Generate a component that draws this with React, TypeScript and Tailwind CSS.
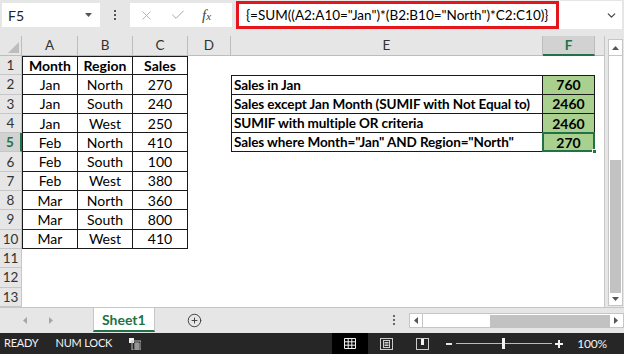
import React from 'react';
import { X, Check, ChevronDown, CirclePlus } from 'lucide-react';

// sheet data for A1:C10
const rows = [
  ['Jan', 'North', '270'],
  ['Jan', 'South', '240'],
  ['Jan', 'West', '250'],
  ['Feb', 'North', '410'],
  ['Feb', 'South', '100'],
  ['Feb', 'West', '380'],
  ['Mar', 'North', '360'],
  ['Mar', 'South', '800'],
  ['Mar', 'West', '410'],
];

// summary block E2:F5
const summary = [
  ['Sales in Jan', '760'],
  ['Sales except Jan Month (SUMIF with Not Equal to)', '2460'],
  ['SUMIF with multiple OR criteria', '2460'],
  ['Sales where Month="Jan" AND Region="North"', '270'],
];

const colHeads = [
  { name: 'A', w: 'w-[56px]' },
  { name: 'B', w: 'w-[55px]' },
  { name: 'C', w: 'w-[55px]' },
  { name: 'D', w: 'w-[43px]' },
  { name: 'E', w: 'w-[312px]' },
  { name: 'F', w: 'w-[52px]' },
];

const FormulaBar = () => (
  <div className="h-[36px] flex items-start pt-[3px] pl-[2px] pr-[2px]">
    <div className="w-[98px] h-[24px] bg-white flex items-center justify-between pl-[6px] pr-[8px] text-[14px] text-[#222]">
      <span>F5</span>
      <svg width="7" height="4" viewBox="0 0 7 4"><path d="M0 0h7L3.5 4z" fill="#555" /></svg>
    </div>
    <div className="w-[30px] h-[24px] flex flex-col items-center justify-center gap-[2px]">
      <span className="w-[2px] h-[2px] bg-[#555]" />
      <span className="w-[2px] h-[2px] bg-[#555]" />
      <span className="w-[2px] h-[2px] bg-[#555]" />
    </div>
    <div className="w-[102px] h-[24px] bg-white flex items-center pl-[9px] gap-[16px]">
      <X size={15} strokeWidth={1.3} color="#a6a6a6" />
      <Check size={16} strokeWidth={1.5} color="#a6a6a6" />
      <span className="font-['Liberation_Serif',serif] italic text-[15px] text-[#444] leading-none">
        f<span className="text-[11px]">x</span>
      </span>
    </div>
    <div className="ml-[4px] mt-[-2px] h-[28px] flex-1 bg-white flex items-center">
      <div className="w-[323px] h-full border-[3px] border-[#e4161c] flex items-center pl-[7px] text-[13.5px] text-black whitespace-nowrap">
        {'{=SUM((A2:A10="Jan")*(B2:B10="North")*C2:C10)}'}
      </div>
      <div className="flex-1" />
      <ChevronDown size={13} strokeWidth={2.2} color="#444" className="mr-[4px]" />
    </div>
  </div>
);

const Grid = () => (
  <div className="w-[605px] h-[271px] flex flex-col bg-white border-r border-[#c6c6c6]">
    {/* column headers */}
    <div className="h-[20px] flex bg-[#e6e6e6] text-[13.5px] text-[#333]">
      <div className="w-[22px] h-full border-r border-b border-[#bdbdbd] flex items-end justify-end p-[2px]">
        <svg width="11" height="11" viewBox="0 0 11 11"><path d="M11 0v11H0z" fill="#bdbdbd" /></svg>
      </div>
      {colHeads.map((c) =>
        c.name === 'F' ? (
          <div key={c.name} className={`${c.w} h-full bg-[#d2d2d2] border-r border-[#bdbdbd] border-b-2 border-b-[#217346] flex items-center justify-center text-[#217346] font-bold`}>
            {c.name}
          </div>
        ) : (
          <div key={c.name} className={`${c.w} h-full border-r border-b border-[#bdbdbd] flex items-center justify-center`}>
            {c.name}
          </div>
        )
      )}
      <div className="flex-1 h-full border-b border-[#bdbdbd]" />
    </div>
    {/* rows */}
    {Array.from({ length: 13 }).map((_, i) => {
      const r = i + 1;
      const data = r >= 2 && r <= 10 ? rows[r - 2] : null;
      const sum = r >= 2 && r <= 5 ? summary[r - 2] : null;
      const head = r === 1;
      const abc = head ? ['Month', 'Region', 'Sales'] : data;
      return (
        <div key={r} className="h-[19.3px] flex text-[14px] text-black">
          {r === 5 ? (
            <div className="w-[22px] h-full bg-[#d2d2d2] border-b border-[#c6c6c6] border-r-2 border-r-[#217346] flex items-center justify-center text-[13.5px] text-[#217346] font-bold">
              {r}
            </div>
          ) : (
            <div className="w-[22px] h-full bg-[#e6e6e6] border-b border-r border-[#c6c6c6] flex items-center justify-center text-[13.5px] text-[#333]">
              {r}
            </div>
          )}
          {abc ? (
            <>
              <div className={`w-[56px] h-full border-l border-r border-b border-[#1a1a1a] ${head ? 'border-t font-bold' : ''} flex items-center justify-center`}>
                {abc[0]}
              </div>
              <div className={`w-[55px] h-full border-r border-b border-[#1a1a1a] ${head ? 'border-t font-bold' : ''} flex items-center justify-center`}>
                {abc[1]}
              </div>
              <div className={`w-[55px] h-full border-r border-b border-[#1a1a1a] ${head ? 'border-t font-bold' : ''} flex items-center justify-center`}>
                {abc[2]}
              </div>
            </>
          ) : (
            <div className="w-[166px] h-full" />
          )}
          <div className="w-[43px] h-full" />
          {sum ? (
            <>
              <div className={`w-[312px] h-full border-l border-r border-b border-[#1a1a1a] ${r === 2 ? 'border-t' : ''} flex items-center pl-[2px] text-[13.5px] tracking-[-0.1px] font-bold whitespace-nowrap`}>
                {sum[0]}
              </div>
              <div className={`relative w-[52px] h-full bg-[#a9d08e] border-r border-b border-[#1a1a1a] ${r === 2 ? 'border-t' : ''} flex items-center justify-center font-bold`}>
                {sum[1]}
                {r === 5 && (
                  <div className="absolute left-[-1px] top-[-1px] right-[-1px] bottom-[-1px] border-2 border-[#217346]">
                    <div className="absolute right-[-4px] bottom-[-4px] w-[5px] h-[5px] bg-[#217346] border border-white" />
                  </div>
                )}
              </div>
            </>
          ) : (
            <div className="w-[364px] h-full" />
          )}
          <div className="flex-1" />
        </div>
      );
    })}
  </div>
);

const VScroll = () => (
  <div className="flex-1 pt-[3px] pl-[3px] pr-[1px]">
    <div className="w-[15px] flex flex-col border border-[#c6c6c6] bg-white">
      <div className="h-[16px] flex items-center justify-center border-b border-[#c6c6c6]">
        <svg width="7" height="4" viewBox="0 0 7 4"><path d="M0 4h7L3.5 0z" fill="#555" /></svg>
      </div>
      <div className="h-[104px] bg-white" />
      <div className="h-[133px] bg-[#c2c2c2] mx-[1px]" />
      <div className="h-[12px] flex items-center justify-center">
        <svg width="7" height="4" viewBox="0 0 7 4"><path d="M0 0h7L3.5 4z" fill="#555" /></svg>
      </div>
    </div>
  </div>
);

const TabBar = () => (
  <div className="h-[26px] flex items-start border-t border-[#c6c6c6] bg-[#e6e6e6]">
    <div className="w-[93px] h-[24px] flex items-center pl-[23px] gap-[22px]">
      <svg width="4" height="7" viewBox="0 0 4 7"><path d="M4 0v7L0 3.5z" fill="#a6a6a6" /></svg>
      <svg width="4" height="7" viewBox="0 0 4 7"><path d="M0 0v7l4-3.5z" fill="#a6a6a6" /></svg>
    </div>
    <div className="w-[62px] h-[24px] bg-white border-l border-r border-[#c6c6c6] border-b-2 border-b-[#217346] flex items-center justify-center text-[14px] font-bold text-[#217346]">
      Sheet1
    </div>
    <div className="w-[80px] h-[24px] flex items-center justify-center">
      <CirclePlus size={15} strokeWidth={1.6} color="#444" />
    </div>
    <div className="w-[155px]" />
    <div className="w-[10px] h-[24px] flex flex-col items-center justify-center gap-[2px]">
      <span className="w-[2px] h-[2px] bg-[#666]" />
      <span className="w-[2px] h-[2px] bg-[#666]" />
      <span className="w-[2px] h-[2px] bg-[#666]" />
    </div>
    <div className="ml-[10px] mt-[5px] w-[215px] h-[15px] flex border border-[#c6c6c6] bg-white">
      <div className="w-[13px] h-full flex items-center justify-center border-r border-[#c6c6c6]">
        <svg width="4" height="7" viewBox="0 0 4 7"><path d="M4 0v7L0 3.5z" fill="#555" /></svg>
      </div>
      <div className="w-[67px] h-full bg-white" />
      <div className="flex-1 h-full bg-[#c2c2c2] my-[1px]" />
      <div className="w-[13px] h-full flex items-center justify-center">
        <svg width="4" height="7" viewBox="0 0 4 7"><path d="M0 0v7l4-3.5z" fill="#555" /></svg>
      </div>
    </div>
  </div>
);

const StatusBar = () => (
  <div className="h-[21px] flex items-center bg-[#262626] text-[11px] tracking-[-0.2px] text-[#f2f2f2]">
    <span className="ml-[4px]">READY</span>
    <span className="ml-[17px]">NUM LOCK</span>
    <svg className="ml-[17px]" width="12" height="12" viewBox="0 0 12 12">
      <rect x="0" y="0" width="5" height="5" fill="#f2f2f2" />
      <rect x="3" y="3" width="9" height="9" fill="none" stroke="#bbb" strokeWidth="1" />
      <path d="M5 6h6M5 8h6M5 10h6M7 4v8M9 4v8" stroke="#bbb" strokeWidth="1" />
    </svg>
    <div className="flex-1" />
    <div className="w-[36px] h-full bg-black flex items-center justify-center">
      <svg width="12" height="11" viewBox="0 0 12 11">
        <path d="M.5.5h11v10H.5zM4.2.5v10M7.8.5v10M.5 3.8h11M.5 7.2h11" stroke="#f2f2f2" fill="none" strokeWidth="1" />
      </svg>
    </div>
    <div className="w-[36px] h-full flex items-center justify-center">
      <svg width="13" height="12" viewBox="0 0 13 12">
        <rect x=".5" y=".5" width="12" height="11" stroke="#ccc" fill="none" />
        <rect x="3.5" y="2.5" width="6" height="7" stroke="#ccc" fill="none" />
        <path d="M4.5 4.5h4M4.5 6h4M4.5 7.5h4" stroke="#ccc" />
      </svg>
    </div>
    <div className="w-[36px] h-full flex items-center justify-center">
      <svg width="13" height="12" viewBox="0 0 13 12">
        <rect x=".5" y=".5" width="12" height="11" stroke="#ccc" fill="none" />
        <rect x="5" y="1" width="3" height="6" fill="#f2f2f2" />
      </svg>
    </div>
    <div className="ml-[6px] flex items-center">
      <span className="w-[6px] h-[2px] bg-[#e6e6e6]" />
      <div className="relative ml-[4px] w-[96px] h-[1px] bg-[#bbb]">
        <div className="absolute left-[46px] top-[-5px] w-[3px] h-[11px] bg-[#f2f2f2]" />
      </div>
      <svg className="ml-[3px]" width="8" height="8" viewBox="0 0 8 8"><path d="M4 0v8M0 4h8" stroke="#f2f2f2" strokeWidth="2" /></svg>
    </div>
    <span className="ml-[14px] mr-[17px] text-[12px]">100%</span>
  </div>
);

export default function App() {
  return (
    <div className="w-[624px] h-[354px] overflow-hidden bg-[#e6e6e6] flex flex-col font-['Lato','Liberation_Sans',sans-serif]">
      <FormulaBar />
      <div className="flex h-[271px]">
        <Grid />
        <VScroll />
      </div>
      <TabBar />
      <StatusBar />
    </div>
  );
}
